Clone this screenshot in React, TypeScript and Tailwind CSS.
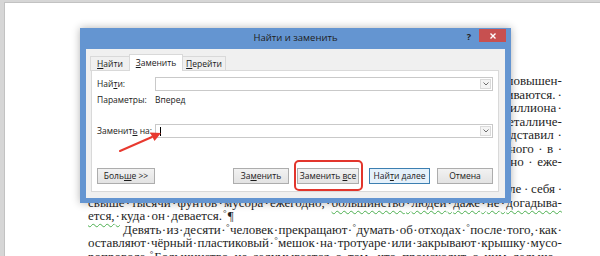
import React from 'react';

type LineProps = {
    text: string;
    justify?: boolean;
    indent?: boolean;
    wavyFrom?: number;
    wavyTo?: number;
};

const DocLine = ({ text, justify = true, indent = false, wavyFrom = -1, wavyTo = -1 }: LineProps) => {
    const parts = text.split(/([·°¶])/).filter(Boolean);
    return (
        <div className={`flex h-[13.5px] items-center whitespace-nowrap leading-none ${justify ? 'justify-between' : ''} ${indent ? 'pl-[35px]' : ''}`}>
            {parts.map((p, i) => {
                const wavy = i >= wavyFrom && i <= wavyTo;
                const sep = p === '·' || p === '°';
                return (
                    <span
                        key={i}
                        className={`${sep && !justify ? 'px-[1px]' : ''} ${p === '°' ? 'text-[9px] -translate-y-[2px]' : ''} ${wavy ? 'underline decoration-wavy decoration-[#4caf50] decoration-1 underline-offset-[3px]' : ''}`}
                    >
                        {p}
                    </span>
                );
            })}
        </div>
    );
};

const Combo = ({ caret = false }: { caret?: boolean }) => (
    <div className="flex-1 h-[14px] flex border border-[#c9c9c9] bg-white">
        <div className="flex-1 flex items-center pl-[4px]">
            {caret && <div className="w-px h-[9px] bg-black" />}
        </div>
        <div className="w-[11px] my-[1px] mr-[1px] flex items-center justify-center border border-[#dadada] bg-[#f4f4f4]">
            <svg width="6" height="4" viewBox="0 0 6 4">
                <path d="M0.5 0.5 L3 3 L5.5 0.5" stroke="#6d6d6d" strokeWidth="1" fill="none" />
            </svg>
        </div>
    </div>
);

const Button = ({ children, w, ml, focused = false }: { children: React.ReactNode; w: string; ml: string; focused?: boolean }) => (
    <div
        className={`h-[16px] flex items-center justify-center text-[8.5px] border ${w} ${ml} ${focused ? 'border-[#3c7fb1] bg-[#e5f1fb]' : 'border-[#adadad] bg-gradient-to-b from-[#f2f2f2] to-[#e3e3e3]'}`}
    >
        <span className="whitespace-pre">{children}</span>
    </div>
);

const App = (): JSX.Element => {
    return (
        <div className="relative w-[600px] h-[256px] overflow-hidden bg-[#d6d6d6] flex pl-[4px] pt-[2px]">
            {/* Document page */}
            <div className="flex-1 bg-white border-l border-t border-[#c2c2c2] pl-[83px] pr-[38px] pt-[71px] font-['Liberation_Serif',serif] text-[13px] text-[#1e1e1e]">
                <DocLine text="В·последние·годы·проблема·утилизации·отходов·стала·предметом·повышен-" />
                <DocLine text="ного·внимания,·ведь·с·каждым·годом·объёмы·мусора·только·увеличиваются.·" />
                <DocLine text="По·данным·экологов,·только·в·США·ежегодно·образуется·более·250·миллиона·" />
                <DocLine text="тонн·твёрдых·бытовых·отходов:·бумаги,·пластика,·стекла·и·металличе-" />
                <DocLine text="ских·изделий.·Один·из·исследователей·университета·недавно·представил·" />
                <DocLine text="доклад,·согласно·которому·средний·гражданин·самого·обеспеченного·в·" />
                <DocLine text="мире·государства·каждое·утро·выносит·мусор·и·открывает·окно·еже-" />
                <DocLine text="дневно,·и·это·только·начало.¶" justify={false} />
                <DocLine text="Исследования·показывают,·что·средний·человек·оставляет·после·себя·" indent />
                <DocLine text="свыше·тысячи·фунтов·мусора·ежегодно,·большинство·людей·даже·не·догадыва-" wavyFrom={10} wavyTo={30} />
                <DocLine text="ется,·куда·он·девается.°¶" justify={false} wavyFrom={0} wavyTo={1} />
                <DocLine text="Девять·из·десяти·°человек·прекращают·°думать·об·отходах·°после·того,·как·" indent />
                <DocLine text="оставляют·чёрный·пластиковый·°мешок·на·тротуаре·или·закрывают·крышку·мусо-" />
                <DocLine text="ропровода.°Большинство·не·задумывается·о·том,·что·происходит·с·ним·дальше.·" />
            </div>

            {/* Find and replace dialog */}
            <div className="absolute left-[80px] top-[28px] w-[431px] h-[175px] bg-[#6495d1] flex flex-col font-['Open_Sans',sans-serif] text-[#1b1b1b] shadow-[0_0_8px_rgba(0,0,0,0.3)]">
                <div className="h-[21px] grid grid-cols-[1fr_auto_1fr]">
                    <div />
                    <div className="flex items-center text-[9.5px] text-[#202020]">Найти и заменить</div>
                    <div className="flex justify-end items-start pr-[5px]">
                        <span className="mt-[2px] mr-[8px] text-[9px] font-bold text-[#222]">?</span>
                        <div className="w-[27px] h-[13px] mt-[1px] bg-[#c75050] flex items-center justify-center">
                            <svg width="6" height="6" viewBox="0 0 6 6">
                                <path d="M0.5 0.5 L5.5 5.5 M5.5 0.5 L0.5 5.5" stroke="#fff" strokeWidth="1.4" />
                            </svg>
                        </div>
                    </div>
                </div>

                <div className="flex-1 mx-[6px] mb-[5px] bg-[#f0f0f0] flex flex-col">
                    {/* Tabs */}
                    <div className="h-[22px] flex items-end pl-[4px]">
                        <div className="w-[40px] h-[15px] border-x border-t border-[#d9d9d9] bg-[#f0f0f0] flex items-center justify-center text-[8.5px]">
                            <span><span className="underline">Н</span>айти</span>
                        </div>
                        <div className="relative z-10 -ml-px w-[54px] h-[17px] border-x border-t border-[#d9d9d9] bg-white flex items-start pt-[2px] justify-center text-[8.5px]">
                            <span><span className="underline">З</span>аменить</span>
                        </div>
                        <div className="-ml-px w-[44px] h-[15px] border-x border-t border-[#d9d9d9] bg-[#f0f0f0] flex items-center justify-center text-[8.5px]">
                            <span><span className="underline">П</span>ерейти</span>
                        </div>
                    </div>

                    {/* Tab panel */}
                    <div className="relative -mt-px ml-[5px] mr-[6px] h-[122px] bg-white border border-[#d9d9d9] pl-[5px] pr-[5px] pt-[6px] flex flex-col text-[8.5px]">
                        <div className="flex items-center">
                            <div className="w-[58px]">Най<span className="underline">т</span>и:</div>
                            <Combo />
                        </div>
                        <div className="mt-[3px] h-[12px] flex items-center">
                            <div className="w-[58px]">Параметры:</div>
                            <div>Вперед</div>
                        </div>
                        <div className="mt-[18px] flex items-center">
                            <div className="w-[58px]">Заменит<span className="underline">ь</span> на:</div>
                            <Combo caret />
                        </div>
                        <div className="mt-[30px] flex">
                            <Button w="w-[58px]" ml="ml-0">Боль<span className="underline">ш</span>е &gt;&gt;</Button>
                            <Button w="w-[56px]" ml="ml-[78px]">За<span className="underline">м</span>енить</Button>
                            <Button w="w-[62px]" ml="ml-[8px]">Заменить <span className="underline">в</span>се</Button>
                            <Button w="w-[61px]" ml="ml-[10px]" focused>Най<span className="underline">т</span>и далее</Button>
                            <Button w="w-[56px]" ml="ml-[7px]">Отмена</Button>
                        </div>
                    </div>
                </div>
            </div>

            {/* Red highlight around the button */}
            <div className="absolute left-[294px] top-[160px] w-[69px] h-[31px] border-2 border-[#e2352c] rounded-[5px]" />

            {/* Red arrow */}
            <svg className="absolute left-0 top-0" width="600" height="256" viewBox="0 0 600 256">
                <path d="M120 151 L152 137" stroke="#e8392f" strokeWidth="2" strokeLinecap="round" />
                <path d="M161 133 L150 132.5 L154.5 141 Z" fill="#e8392f" />
            </svg>
        </div>
    );
};

export default App;
